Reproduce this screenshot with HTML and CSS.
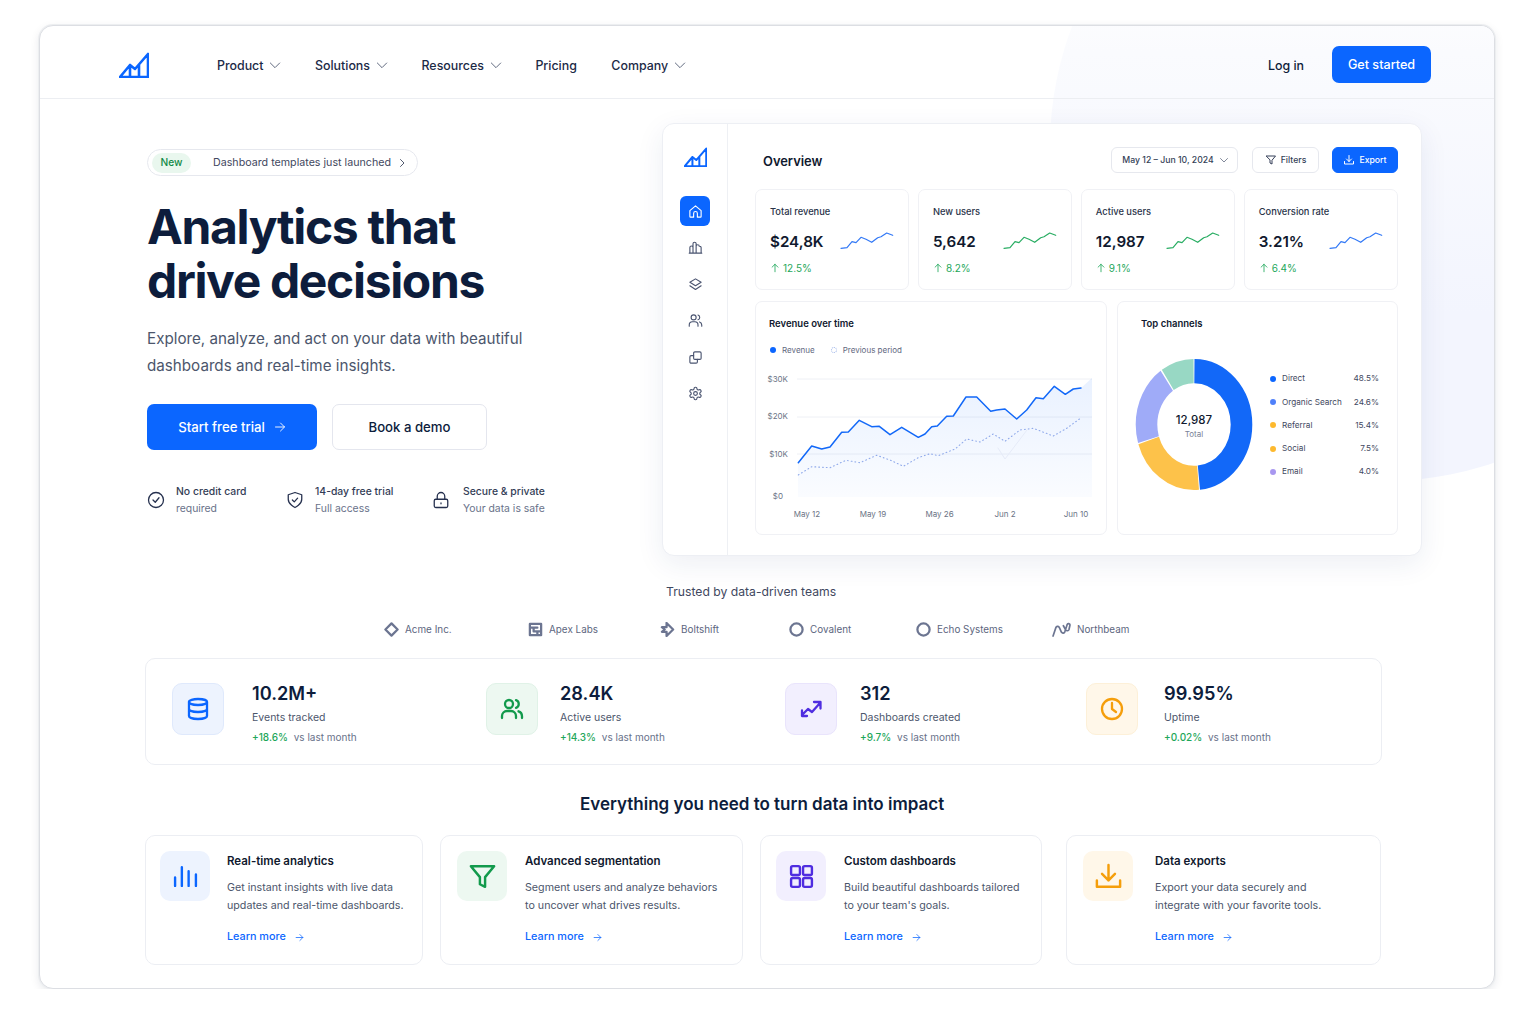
FILE: index.html
```html
<!DOCTYPE html>
<html lang="en">
<head>
  <meta charset="UTF-8">
  <meta name="viewport" content="width=device-width, initial-scale=1.0">
  <title>Analytics that drive decisions</title>
  <link rel="stylesheet" href="styles.css">
</head>
<body>

<svg class="sprite" xmlns="http://www.w3.org/2000/svg">
  <symbol id="i-logo" viewBox="0 0 30 26"><path d="M1 25L11 13l5 4L29 2v23zM11 13v12M20 13v12"/></symbol>
  <symbol id="i-chevron" viewBox="0 0 24 24"><path d="M5 9l7 7 7-7"/></symbol>
  <symbol id="i-chevron-right" viewBox="0 0 24 24"><path d="M9 5l7 7-7 7"/></symbol>
  <symbol id="i-arrow" viewBox="0 0 24 24"><path d="M3 12h18M13 4l8 8-8 8"/></symbol>
  <symbol id="i-up" viewBox="0 0 24 24"><path d="M12 21V3M5 10l7-7 7 7"/></symbol>
  <symbol id="i-check" viewBox="0 0 24 24"><circle cx="12" cy="12" r="10"/><path d="M8 12l3 3 5-6"/></symbol>
  <symbol id="i-shield" viewBox="0 0 24 24"><path d="M12 22s9-4 9-11V5l-9-3-9 3v6c0 7 9 11 9 11z"/><path d="M8.5 12l2.5 2.5 4.500-5"/></symbol>
  <symbol id="i-lock" viewBox="0 0 24 24"><rect x="3" y="11" width="18" height="11" rx="2"/><path d="M7 11V7a5 5 0 0 1 10 0v4M12 16v1"/></symbol>
  <symbol id="i-home" viewBox="0 0 24 24"><path d="M3 10.5L12 3l9 7.5V20a1 1 0 0 1-1 1h-5v-6a3 3 0 0 0-6 0v6H4a1 1 0 0 1-1-1z"/></symbol>
  <symbol id="i-bars" viewBox="0 0 24 24"><path d="M3 21V12a2.500 2.500 0 0 1 5 0v9M8 21V6a2.500 2.500 0 0 1 5 0v15M13 21V10a2.500 2.500 0 0 1 5 0a2.500 2.500 0 0 1 3 2v9M2 21h20"/></symbol>
  <symbol id="i-layers" viewBox="0 0 24 24"><path d="M12 3l9 5.500-9 5.500-9-5.500zM3 14l9 6 9-6"/></symbol>
  <symbol id="i-users" viewBox="0 0 24 24"><path d="M2 21v-2a5 5 0 0 1 5-5h4a5 5 0 0 1 5 5v2"/><circle cx="9" cy="7" r="4"/><path d="M22 21v-2a5 5 0 0 0-3.500-4.700M16 3.200a4 4 0 0 1 0 7.600"/></symbol>
  <symbol id="i-copy" viewBox="0 0 24 24"><rect x="9" y="3" width="12" height="12" rx="2"/><path d="M15 15v4a2 2 0 0 1-2 2H5a2 2 0 0 1-2-2v-8a2 2 0 0 1 2-2h4"/></symbol>
  <symbol id="i-gear" viewBox="0 0 24 24"><path d="M12.22 2h-.44a2 2 0 0 0-2 2v.18a2 2 0 0 1-1 1.73l-.43.25a2 2 0 0 1-2 0l-.15-.08a2 2 0 0 0-2.73.73l-.22.38a2 2 0 0 0 .73 2.73l.15.1a2 2 0 0 1 1 1.72v.51a2 2 0 0 1-1 1.74l-.15.09a2 2 0 0 0-.73 2.73l.22.38a2 2 0 0 0 2.73.73l.15-.08a2 2 0 0 1 2 0l.43.25a2 2 0 0 1 1 1.73V20a2 2 0 0 0 2 2h.44a2 2 0 0 0 2-2v-.18a2 2 0 0 1 1-1.73l.43-.25a2 2 0 0 1 2 0l.15.08a2 2 0 0 0 2.73-.73l.22-.39a2 2 0 0 0-.73-2.73l-.15-.08a2 2 0 0 1-1-1.74v-.5a2 2 0 0 1 1-1.74l.15-.09a2 2 0 0 0 .73-2.73l-.22-.38a2 2 0 0 0-2.73-.73l-.15.08a2 2 0 0 1-2 0l-.43-.25a2 2 0 0 1-1-1.73V4a2 2 0 0 0-2-2z"/><circle cx="12" cy="12" r="3"/></symbol>
  <symbol id="i-funnel" viewBox="0 0 24 24"><path d="M3 4h18l-7 8.500V20l-4-2v-5.500z"/></symbol>
  <symbol id="i-download" viewBox="0 0 24 24"><path d="M3 15v5h18v-5M7 10l5 5 5-5M12 15V3"/></symbol>
  <symbol id="i-database" viewBox="0 0 24 24"><ellipse cx="12" cy="5" rx="9" ry="3"/><path d="M3 5v14a9 3 0 0 0 18 0V5M3 12a9 3 0 0 0 18 0"/></symbol>
  <symbol id="i-trend" viewBox="0 0 24 24"><path d="M3 18l6-6 4 3 8-9M15 5h6.500v6.500M3 13.500V19h5"/></symbol>
  <symbol id="i-clock" viewBox="0 0 24 24"><circle cx="12" cy="12" r="10"/><path d="M12 6v6l4 3"/></symbol>
  <symbol id="i-realtime" viewBox="0 0 24 24"><path d="M2 21v-8M8.500 21V3M15 21V7M22 21V10"/></symbol>
  <symbol id="i-grid" viewBox="0 0 24 24"><rect x="2" y="2" width="8.500" height="8.500" rx="1.500"/><rect x="13.500" y="2" width="8.500" height="8.500" rx="1.500"/><rect x="2" y="13.500" width="8.500" height="8.500" rx="1.500"/><rect x="13.500" y="13.500" width="8.500" height="8.500" rx="1.500"/></symbol>
  <symbol id="i-spark" viewBox="-1 -1 54 18"><path d="M0 15.300L6 14.700 11 8.700 15 9.700 20 4.300 25 6.300 30.700 9.300 36.700 4.700 40 3.700 45.700 0 51.700 2.300"/></symbol>
  <symbol id="l-acme" viewBox="0 0 16 16"><path d="M8 1.500L14.500 8 8 14.500 1.500 8z"/></symbol>
  <symbol id="l-apex" viewBox="0 0 16 16"><path d="M2 2h12v12H2zM2 6h8M6 6v4h8M10 10v4"/></symbol>
  <symbol id="l-bolt" viewBox="0 0 16 16"><path d="M7 1l7 7-7 7v-4.500H2L5 8 2 5.500h5z"/></symbol>
  <symbol id="l-ring" viewBox="0 0 16 16"><circle cx="8" cy="8" r="6.500"/></symbol>
  <symbol id="l-north" viewBox="0 0 20 16"><path d="M1 15l3-9a2 2 0 0 1 3.500-.5L10 11a2 2 0 0 0 3.500-.5L16 3a1.500 1.500 0 0 1 3 .5L18 8a2 2 0 0 1-3.500.5L12 4"/></symbol>
</svg>

<div class="frame">
  <div class="backdrop"></div>

  <header class="topnav">
    <svg class="icon logo"><use href="#i-logo"/></svg>
    <nav class="menu">
      <a href="#">Product <svg class="icon chevron"><use href="#i-chevron"/></svg></a>
      <a href="#">Solutions <svg class="icon chevron"><use href="#i-chevron"/></svg></a>
      <a href="#">Resources <svg class="icon chevron"><use href="#i-chevron"/></svg></a>
      <a class="menu-plain" href="#">Pricing</a>
      <a href="#">Company <svg class="icon chevron"><use href="#i-chevron"/></svg></a>
    </nav>
    <a class="login" href="#">Log in</a>
    <a class="btn-start" href="#">Get started</a>
  </header>

  <section class="hero">
    <div class="hero-copy">
      <a class="badge" href="#">
        <span class="badge-tag">New</span>
        <span class="badge-text">Dashboard templates just launched</span>
        <svg class="icon badge-arrow"><use href="#i-chevron-right"/></svg>
      </a>
      <h1>Analytics that<br>drive decisions</h1>
      <p class="lead">Explore, analyze, and act on your data with beautiful<br>dashboards and real-time insights.</p>
      <div class="hero-actions">
        <a class="btn-primary" href="#">Start free trial <svg class="icon"><use href="#i-arrow"/></svg></a>
        <a class="btn-secondary" href="#">Book a demo</a>
      </div>
      <ul class="perks">
        <li><svg class="icon"><use href="#i-check"/></svg><div><b>No credit card</b><span>required</span></div></li>
        <li><svg class="icon"><use href="#i-shield"/></svg><div><b>14-day free trial</b><span>Full access</span></div></li>
        <li><svg class="icon"><use href="#i-lock"/></svg><div><b>Secure &amp; private</b><span>Your data is safe</span></div></li>
      </ul>
    </div>

    <div class="dashboard">
      <aside class="side">
        <svg class="icon side-logo"><use href="#i-logo"/></svg>
        <a class="side-item active" href="#"><svg class="icon"><use href="#i-home"/></svg></a>
        <a class="side-item" href="#"><svg class="icon"><use href="#i-bars"/></svg></a>
        <a class="side-item" href="#"><svg class="icon"><use href="#i-layers"/></svg></a>
        <a class="side-item" href="#"><svg class="icon"><use href="#i-users"/></svg></a>
        <a class="side-item" href="#"><svg class="icon"><use href="#i-copy"/></svg></a>
        <a class="side-item" href="#"><svg class="icon"><use href="#i-gear"/></svg></a>
      </aside>
      <div class="board">
        <div class="board-head">
          <h2>Overview</h2>
          <div class="tool tool-date">May 12 – Jun 10, 2024 <svg class="icon"><use href="#i-chevron"/></svg></div>
          <div class="tool tool-filter"><svg class="icon"><use href="#i-funnel"/></svg> Filters</div>
          <div class="tool tool-export"><svg class="icon"><use href="#i-download"/></svg> Export</div>
        </div>

        <div class="kpis">
          <div class="kpi">
            <div class="kpi-label">Total revenue</div>
            <div class="kpi-row"><strong>$24,8K</strong><svg class="icon spark blue"><use href="#i-spark"/></svg></div>
            <div class="kpi-delta"><svg class="icon"><use href="#i-up"/></svg> 12.5%</div>
          </div>
          <div class="kpi">
            <div class="kpi-label">New users</div>
            <div class="kpi-row"><strong>5,642</strong><svg class="icon spark green"><use href="#i-spark"/></svg></div>
            <div class="kpi-delta"><svg class="icon"><use href="#i-up"/></svg> 8.2%</div>
          </div>
          <div class="kpi">
            <div class="kpi-label">Active users</div>
            <div class="kpi-row"><strong>12,987</strong><svg class="icon spark green"><use href="#i-spark"/></svg></div>
            <div class="kpi-delta"><svg class="icon"><use href="#i-up"/></svg> 9.1%</div>
          </div>
          <div class="kpi">
            <div class="kpi-label">Conversion rate</div>
            <div class="kpi-row"><strong>3.21%</strong><svg class="icon spark blue"><use href="#i-spark"/></svg></div>
            <div class="kpi-delta"><svg class="icon"><use href="#i-up"/></svg> 6.4%</div>
          </div>
        </div>

        <div class="charts">
          <div class="chart-card revenue">
            <h3>Revenue over time</h3>
            <div class="legend-line">
              <span class="dot-solid"></span>Revenue
              <span class="dot-hollow"></span>Previous period
            </div>
            <svg class="line-chart" viewBox="756 362 350 172" width="350" height="172">
              <defs>
                <linearGradient id="area" x1="0" y1="0" x2="0" y2="1">
                  <stop offset="0" stop-color="#0b66ff" stop-opacity=".09"/>
                  <stop offset="1" stop-color="#0b66ff" stop-opacity=".02"/>
                </linearGradient>
              </defs>
              <path class="grid-line" d="M797 379H1092M797 417H1092M797 454H1092"/>
              <path fill="url(#area)" d="M798 462.700L811.700 446 821.700 449 830 447 841.700 432.300 848.300 432 859.300 420.300 871.700 426.700 879.300 426.300 890 434.700 901.700 427.300 918.300 437.300 925 434 931.700 426.700 937.300 426 946.700 416.300 953.300 416 966 397 976.700 397 990.700 411.300 996.700 410 1005 409 1016.700 419 1026.700 410 1036 397.700 1043.300 398.700 1054.300 386.300 1065.300 394.300 1073.300 389 1081 388 1092 378V497H798z"/>
              <path class="ghost-line" d="M998 448L1005 459 1027 430"/>
              <path class="prev-line" d="M798.300 475L811.700 466.700 830 467.700 846 460.300 860 462.700 876.700 455.300 890 460 903.300 466.300 918.300 457.700 930 453.700 938.300 455.700 955 449 966.700 439 980 442 993.300 434 1005 441.300 1020 430 1033.300 428.300 1053.300 436 1066.700 428.300 1081.700 417.300"/>
              <path class="rev-line" d="M798.300 462.700L811.700 446 821.700 449 830 447 841.700 432.300 848.300 432 859.300 420.300 871.700 426.700 879.300 426.300 890 434.700 901.700 427.300 918.300 437.300 925 434 931.700 426.700 937.300 426 946.700 416.300 953.300 416 966 397 976.700 397 990.700 411.300 996.700 410 1005 409 1016.700 419 1026.700 410 1036 397.700 1043.300 398.700 1054.300 386.300 1065.300 394.300 1073.300 389 1081 388"/>
              <g class="axis-y">
                <text x="788" y="382">$30K</text>
                <text x="788" y="419">$20K</text>
                <text x="788" y="456.500">$10K</text>
                <text x="783" y="499">$0</text>
              </g>
              <g class="axis-x">
                <text x="807" y="516.500">May 12</text>
                <text x="873" y="516.500">May 19</text>
                <text x="939.500" y="516.500">May 26</text>
                <text x="1005" y="516.500">Jun 2</text>
                <text x="1076" y="516.500">Jun 10</text>
              </g>
            </svg>
          </div>

          <div class="chart-card channels">
            <h3>Top channels</h3>
            <div class="channel-body">
              <div class="donut-wrap">
                <svg class="donut" viewBox="0 0 120 120" preserveAspectRatio="none">
                  <g transform="rotate(-90 60 60)">
                    <circle cx="60" cy="60" r="47.500" stroke="#1268f8" pathLength="360" stroke-dasharray="173.500 186.500" stroke-dashoffset="-.5"/>
                    <circle cx="60" cy="60" r="47.500" stroke="#fdc24a" pathLength="360" stroke-dasharray="77.500 282.500" stroke-dashoffset="-175"/>
                    <circle cx="60" cy="60" r="47.500" stroke="#9fabf8" pathLength="360" stroke-dasharray="71.500 288.500" stroke-dashoffset="-253.500"/>
                    <circle cx="60" cy="60" r="47.500" stroke="#98d8c4" pathLength="360" stroke-dasharray="33 327" stroke-dashoffset="-326.500"/>
                  </g>
                </svg>
                <div class="donut-label"><b>12,987</b><span>Total</span></div>
              </div>
              <ul class="channel-list">
                <li><i class="c-direct"></i><span>Direct</span><b>48.5%</b></li>
                <li><i class="c-organic"></i><span>Organic Search</span><b>24.6%</b></li>
                <li><i class="c-yellow"></i><span>Referral</span><b>15.4%</b></li>
                <li><i class="c-yellow"></i><span>Social</span><b>7.5%</b></li>
                <li><i class="c-email"></i><span>Email</span><b>4.0%</b></li>
              </ul>
            </div>
          </div>
        </div>
      </div>
    </div>
  </section>

  <p class="trusted-title">Trusted by data-driven teams</p>
  <div class="trusted">
    <span><svg class="icon"><use href="#l-acme"/></svg>Acme Inc.</span>
    <span><svg class="icon"><use href="#l-apex"/></svg>Apex Labs</span>
    <span><svg class="icon"><use href="#l-bolt"/></svg>Boltshift</span>
    <span><svg class="icon"><use href="#l-ring"/></svg>Covalent</span>
    <span><svg class="icon"><use href="#l-ring"/></svg>Echo Systems</span>
    <span><svg class="icon wide"><use href="#l-north"/></svg>Northbeam</span>
  </div>

  <section class="stats">
    <div class="stat">
      <div class="stat-icon tint-blue"><svg class="icon"><use href="#i-database"/></svg></div>
      <div><div class="stat-value">10.2M+</div><div class="stat-label">Events tracked</div><div class="stat-delta"><b>+18.6%</b> vs last month</div></div>
    </div>
    <div class="stat">
      <div class="stat-icon tint-green"><svg class="icon"><use href="#i-users"/></svg></div>
      <div><div class="stat-value">28.4K</div><div class="stat-label">Active users</div><div class="stat-delta"><b>+14.3%</b> vs last month</div></div>
    </div>
    <div class="stat">
      <div class="stat-icon tint-purple"><svg class="icon"><use href="#i-trend"/></svg></div>
      <div><div class="stat-value">312</div><div class="stat-label">Dashboards created</div><div class="stat-delta"><b>+9.7%</b> vs last month</div></div>
    </div>
    <div class="stat">
      <div class="stat-icon tint-orange"><svg class="icon"><use href="#i-clock"/></svg></div>
      <div><div class="stat-value">99.95%</div><div class="stat-label">Uptime</div><div class="stat-delta"><b>+0.02%</b> vs last month</div></div>
    </div>
  </section>

  <h2 class="section-title">Everything you need to turn data into impact</h2>

  <section class="features">
    <div class="feature">
      <div class="feature-icon tint-blue"><svg class="icon"><use href="#i-realtime"/></svg></div>
      <div>
        <h3>Real-time analytics</h3>
        <p>Get instant insights with live data<br>updates and real-time dashboards.</p>
        <a href="#">Learn more <svg class="icon"><use href="#i-arrow"/></svg></a>
      </div>
    </div>
    <div class="feature">
      <div class="feature-icon tint-green"><svg class="icon big"><use href="#i-funnel"/></svg></div>
      <div>
        <h3>Advanced segmentation</h3>
        <p>Segment users and analyze behaviors<br>to uncover what drives results.</p>
        <a href="#">Learn more <svg class="icon"><use href="#i-arrow"/></svg></a>
      </div>
    </div>
    <div class="feature">
      <div class="feature-icon tint-purple"><svg class="icon"><use href="#i-grid"/></svg></div>
      <div>
        <h3>Custom dashboards</h3>
        <p>Build beautiful dashboards tailored<br>to your team's goals.</p>
        <a href="#">Learn more <svg class="icon"><use href="#i-arrow"/></svg></a>
      </div>
    </div>
    <div class="feature">
      <div class="feature-icon tint-orange"><svg class="icon big"><use href="#i-download"/></svg></div>
      <div>
        <h3>Data exports</h3>
        <p>Export your data securely and<br>integrate with your favorite tools.</p>
        <a href="#">Learn more <svg class="icon"><use href="#i-arrow"/></svg></a>
      </div>
    </div>
  </section>
</div>

</body>
</html>
```

FILE: styles.css
```css
body {
  font-family: Inter, "Noto Sans", sans-serif;
  margin: 0;
  padding: 0;
  background-color: #fff;
  color: #0f1d3a;
}

a {
  color: inherit;
  text-decoration: none;
}

h1, h2, h3, p, ul {
  margin: 0;
  padding: 0;
}

ul {
  list-style: none;
}

.sprite {
  display: none;
}

.icon {
  fill: none;
  stroke: currentColor;
  stroke-width: 2;
  stroke-linecap: round;
  stroke-linejoin: round;
  flex: none;
}

.frame {
  position: relative;
  overflow: hidden;
  box-sizing: border-box;
  width: 1456px;
  height: 964px;
  margin: 25px 0 0 39px;
  background-color: #fff;
  border: 1px solid #dcdee3;
  border-radius: 14px;
  box-shadow: 0 0 0 1px #eceef0, 0 3px 10px rgba(20, 30, 60, 0.1);
}

.backdrop {
  position: absolute;
  left: 1010px;
  top: -215px;
  width: 670px;
  height: 670px;
  border-radius: 50%;
  background: linear-gradient(180deg, #fff 22%, #fafbfe 36%, #f3f5fe 75%);
}

/* top bar */
.topnav {
  position: relative;
  display: flex;
  align-items: center;
  box-sizing: border-box;
  height: 73px;
  padding: 5px 63px 0 79px;
  border-bottom: 1px solid #eceef2;
}

.logo {
  width: 30px;
  height: 26px;
  color: #0b66ff;
  stroke-width: 2.6;
}

.menu {
  display: flex;
  gap: 31.5px;
  margin: 1px 0 0 68px;
  font-size: 12.4px;
  font-weight: 500;
  flex: 1;
}

.menu a {
  display: flex;
  align-items: center;
  gap: 4px;
  color: #1c2a46;
}

.menu .menu-plain {
  margin-right: 3px;
}

.chevron {
  width: 16px;
  height: 16px;
  color: #626b80;
  stroke-width: 1.5;
}

.login {
  margin: 1px 28px 0 0;
  font-size: 12.4px;
  font-weight: 500;
}

.btn-start {
  display: flex;
  align-items: center;
  justify-content: center;
  width: 99px;
  height: 37px;
  background-color: #0b66ff;
  color: #fff;
  border-radius: 7px;
  font-size: 12.6px;
  font-weight: 500;
}

/* hero */
.hero {
  position: relative;
  display: flex;
  height: 458px;
  padding-left: 107px;
}

.hero-copy {
  width: 515px;
  padding-top: 50px;
  flex: none;
}

.badge {
  display: inline-flex;
  align-items: center;
  box-sizing: border-box;
  width: 271px;
  height: 27px;
  padding: 0 9px 0 4px;
  background-color: #fff;
  border: 1px solid #e6e8ee;
  border-radius: 14px;
  font-size: 10.7px;
  color: #3f4860;
}

.badge-tag {
  box-sizing: border-box;
  width: 39px;
  height: 20px;
  margin-right: 22px;
  line-height: 19px;
  font-size: 10.2px;
  text-align: center;
  background-color: #e9f7ee;
  color: #128a47;
  border-radius: 10px;
  font-weight: 500;
}

.badge-text {
  flex: 1;
}

.badge-arrow {
  width: 12px;
  height: 12px;
  stroke-width: 1.8;
}

h1 {
  margin-top: 24px;
  font-size: 48px;
  line-height: 54px;
  font-weight: 700;
  letter-spacing: -1.35px;
  color: #0d1d3c;
}

.lead {
  margin-top: 17px;
  font-size: 15.2px;
  line-height: 27px;
  color: #4c566c;
}

.hero-actions {
  display: flex;
  gap: 15px;
  margin-top: 25px;
}

.btn-primary,
.btn-secondary {
  display: flex;
  align-items: center;
  justify-content: center;
  box-sizing: border-box;
  height: 46px;
  border-radius: 7px;
  font-size: 13.2px;
  font-weight: 500;
}

.btn-primary {
  width: 170px;
  gap: 9px;
  background-color: #0b66ff;
  color: #fff;
}

.btn-primary svg {
  width: 12px;
  height: 12px;
  stroke-width: 1.8;
}

.btn-secondary {
  width: 155px;
  background-color: #fff;
  border: 1px solid #e4e6ee;
  color: #0d1d3c;
}

.perks {
  display: flex;
  margin-top: 33px;
  font-size: 10.4px;
  line-height: 17px;
}

.perks li {
  display: flex;
  align-items: center;
  gap: 11px;
}

.perks li:nth-child(1) { width: 139px; }
.perks li:nth-child(2) { width: 146px; }
.perks li:nth-child(3) { gap: 13px; }

.perks .icon {
  width: 18px;
  height: 18px;
  color: #25304e;
  stroke-width: 1.7;
}

.perks b {
  display: block;
  font-weight: 500;
  color: #333d56;
}

.perks span {
  color: #69728a;
}

/* dashboard mock */
.dashboard {
  display: flex;
  box-sizing: border-box;
  width: 760px;
  height: 433px;
  margin-top: 24px;
  background-color: #fff;
  border: 1px solid #edeff4;
  border-radius: 12px;
  box-shadow: 0 8px 28px rgba(30, 50, 110, 0.08);
}

.side {
  display: flex;
  flex-direction: column;
  align-items: center;
  gap: 6.5px;
  box-sizing: border-box;
  width: 65px;
  padding-top: 23px;
  border-right: 1px solid #eef0f4;
}

.side-logo {
  width: 23px;
  height: 20px;
  margin-bottom: 22.5px;
  color: #0b66ff;
  stroke-width: 2.6;
}

.side-item {
  display: flex;
  align-items: center;
  justify-content: center;
  width: 30px;
  height: 30px;
  border-radius: 6px;
  color: #4a5470;
}

.side-item svg {
  width: 15px;
  height: 15px;
  stroke-width: 1.8;
}

.side-item.active {
  background-color: #0b66ff;
  color: #fff;
}

.board {
  flex: 1;
  padding: 23px 23px 0 27px;
}

.board-head {
  display: flex;
  align-items: center;
  gap: 13px;
  height: 26px;
  margin-bottom: 16px;
}

.board-head h2 {
  flex: 1;
  padding: 2px 0 0 8px;
  font-size: 12.9px;
  font-weight: 600;
  color: #10192e;
}

.tool {
  display: flex;
  align-items: center;
  justify-content: center;
  box-sizing: border-box;
  height: 26px;
  border: 1px solid #e6e8ee;
  border-radius: 6px;
  background-color: #fff;
  font-size: 8.7px;
  font-weight: 500;
  color: #353f58;
}

.tool svg {
  width: 12px;
  height: 12px;
}

.tool-date {
  width: 127px;
  margin-right: 1px;
  padding-left: 3px;
  gap: 4px;
}

.tool-date svg {
  color: #626b80;
  stroke-width: 1.6;
}

.tool-filter {
  width: 67px;
  gap: 4px;
}

.tool-export {
  width: 66px;
  gap: 4px;
  background-color: #0b66ff;
  border-color: #0b66ff;
  color: #fff;
}

.kpis {
  display: grid;
  grid-template-columns: repeat(4, 1fr);
  gap: 8.7px;
}

.kpi {
  box-sizing: border-box;
  height: 101px;
  padding: 16px 14px 0;
  border: 1px solid #f0f1f5;
  border-radius: 7px;
}

.kpi-label {
  font-size: 9.3px;
  line-height: 12px;
  font-weight: 500;
  color: #2a3349;
}

.kpi-row {
  display: flex;
  align-items: center;
  justify-content: space-between;
  height: 22px;
  margin-top: 12px;
}

.kpi-row strong {
  font-size: 15.2px;
  font-weight: 600;
  color: #10192e;
}

.spark {
  width: 54px;
  height: 18px;
  stroke-width: 1.2;
}

.spark.blue { color: #3379f6; }
.spark.green { color: #29ad63; }

.kpi-delta {
  display: flex;
  align-items: center;
  gap: 3px;
  margin-top: 10px;
  font-size: 10px;
  line-height: 12px;
  color: #1ea75a;
}

.kpi-delta svg {
  width: 10px;
  height: 10px;
}

.charts {
  display: flex;
  gap: 10px;
  margin-top: 11px;
}

.chart-card {
  box-sizing: border-box;
  height: 234px;
  border: 1px solid #f0f1f5;
  border-radius: 7px;
}

.chart-card h3 {
  padding-top: 16px;
  font-size: 9.5px;
  line-height: 12px;
  font-weight: 600;
  color: #10192e;
}

.revenue {
  width: 352px;
}

.revenue h3 {
  padding-left: 13px;
}

.legend-line {
  display: flex;
  align-items: center;
  height: 12px;
  margin-top: 14px;
  padding-left: 14px;
  font-size: 8px;
  color: #5f6880;
}

.dot-solid,
.dot-hollow {
  width: 6px;
  height: 6px;
  margin-right: 6px;
  border-radius: 50%;
  background-color: #0b66ff;
}

.dot-hollow {
  box-sizing: border-box;
  margin-left: 16px;
  background-color: transparent;
  border: 1px dotted #9db4e8;
}

.line-chart {
  display: block;
  margin-top: 6px;
}

.grid-line {
  fill: none;
  stroke: #eef0f5;
}

.rev-line,
.prev-line,
.ghost-line {
  fill: none;
  stroke-linejoin: round;
  stroke-linecap: round;
}

.rev-line {
  stroke: #1268f8;
  stroke-width: 1.5;
}

.prev-line {
  stroke: #8fa9ea;
  stroke-width: 1.1;
  stroke-dasharray: 0.8 3;
}

.ghost-line {
  stroke: #e6ebf8;
}

.line-chart text {
  font-size: 8px;
  fill: #6b7385;
}

.axis-y text { text-anchor: end; }
.axis-x text { text-anchor: middle; }

.channels {
  width: 281px;
}

.channels h3 {
  padding-left: 23px;
}

.channel-body {
  display: flex;
  align-items: center;
  justify-content: space-between;
  margin-top: 27px;
  padding: 0 18px 0 16px;
}

.donut-wrap {
  position: relative;
  width: 120px;
  height: 135px;
}

.donut {
  display: block;
  width: 120px;
  height: 135px;
}

.donut circle {
  fill: none;
  stroke-width: 21.6;
}

.donut-label {
  position: absolute;
  left: 0;
  right: 0;
  top: 53px;
  text-align: center;
}

.donut-label b {
  display: block;
  font-size: 11.5px;
  line-height: 20px;
  font-weight: 500;
  color: #10192e;
}

.donut-label span {
  display: block;
  font-size: 8px;
  line-height: 8px;
  color: #7a8296;
}

.channel-list {
  width: 109px;
  margin-top: 2px;
  font-size: 8.2px;
  line-height: 23.2px;
  color: #3f4860;
}

.channel-list li {
  display: flex;
  align-items: center;
}

.channel-list i {
  width: 6px;
  height: 6px;
  margin-right: 6px;
  border-radius: 50%;
}

.channel-list span {
  flex: 1;
}

.channel-list b {
  font-weight: 400;
}

.c-direct { background-color: #0b66ff; }
.c-organic { background-color: #4f80fa; }
.c-yellow { background-color: #fdb92e; }
.c-email { background-color: #a897f0; }

/* trusted by */
.trusted-title {
  margin-top: 27px;
  padding-left: 626px;
  font-size: 12.2px;
  line-height: 16px;
  color: #3f4860;
}

.trusted {
  display: grid;
  grid-template-columns: 144px 132px 129px 127px 136px auto;
  margin-top: 21px;
  padding-left: 344px;
  font-size: 9.9px;
  line-height: 16px;
  color: #5d6680;
}

.trusted span {
  display: flex;
  align-items: center;
  gap: 6px;
}

.trusted .icon {
  width: 15px;
  height: 15px;
  color: #6c7591;
  stroke-width: 2.4;
}

.trusted .icon.wide {
  width: 19px;
  stroke-width: 1.8;
}

/* stats */
.stats {
  display: grid;
  grid-template-columns: 314px 299px 301px 1fr;
  box-sizing: border-box;
  width: 1237px;
  height: 107px;
  margin: 21px 0 0 105px;
  padding: 22px 0 0 26px;
  border: 1px solid #eceef3;
  border-radius: 10px;
  background-color: #fff;
}

.stat {
  display: flex;
}

.stat-icon {
  display: flex;
  align-items: center;
  justify-content: center;
  box-sizing: border-box;
  width: 52px;
  height: 52px;
  margin: 2px 28px 0 0;
  border-radius: 10px;
  border: 1px solid transparent;
}

.stat:nth-child(2) .stat-icon { margin-right: 22px; }
.stat:nth-child(3) .stat-icon { margin-right: 23px; }
.stat:nth-child(4) .stat-icon { margin-right: 26px; }

.stat-icon svg {
  width: 24px;
  height: 24px;
  stroke-width: 2.3;
}

.tint-blue { background-color: #edf3fe; border-color: #dfe9fc; color: #0b66ff; }
.tint-green { background-color: #edf8f1; border-color: #e0f2e7; color: #129a4c; }
.tint-purple { background-color: #f2effe; border-color: #e9e4fc; color: #4f2de0; }
.tint-orange { background-color: #fff7e9; border-color: #fdf0d8; color: #f59e0b; }

.stat-value {
  font-size: 18.2px;
  line-height: 24px;
  font-weight: 600;
  color: #0d1d3c;
}

.stat-label {
  margin-top: 6px;
  font-size: 10.5px;
  line-height: 14px;
  color: #4c566c;
}

.stat-delta {
  margin-top: 5px;
  font-size: 10px;
  line-height: 14px;
  color: #69728a;
}

.stat-delta b {
  margin-right: 3px;
  font-weight: 500;
  color: #1ea75a;
}

.section-title {
  margin-top: 28px;
  padding-left: 540px;
  font-size: 17px;
  line-height: 22px;
  font-weight: 600;
  color: #0d1d3c;
}

/* feature cards */
.features {
  display: flex;
  gap: 17px;
  margin: 20px 0 0 105px;
}

.feature {
  display: flex;
  box-sizing: border-box;
  width: 278px;
  height: 130px;
  padding: 15px 0 0 14px;
  background-color: #fff;
  border: 1px solid #eceef3;
  border-radius: 10px;
}

.feature:nth-child(2) { width: 303px; padding-left: 16px; }
.feature:nth-child(3) { width: 282px; padding-left: 15px; }
.feature:nth-child(4) { width: 315px; margin-left: 7px; padding-left: 16px; }

.feature-icon {
  display: flex;
  align-items: center;
  justify-content: center;
  width: 50px;
  height: 50px;
  margin-right: 18px;
  border-radius: 10px;
}

.feature:nth-child(1) .feature-icon { margin-right: 17px; }
.feature:nth-child(4) .feature-icon { margin-right: 22px; }

.feature-icon svg {
  width: 25px;
  height: 25px;
  stroke-width: 2.3;
}

.feature-icon svg.big {
  width: 31px;
  height: 31px;
  stroke-width: 1.9;
}

.feature h3 {
  margin-top: 2px;
  font-size: 11.5px;
  line-height: 16px;
  font-weight: 600;
  color: #10192e;
}

.feature p {
  margin-top: 10px;
  font-size: 10.7px;
  line-height: 18px;
  color: #4c566c;
}

.feature a {
  display: flex;
  align-items: center;
  gap: 9px;
  margin-top: 15px;
  font-size: 10.8px;
  line-height: 14px;
  font-weight: 500;
  color: #0b66ff;
}

.feature a svg {
  width: 9px;
  height: 9px;
  stroke-width: 2;
}
```
